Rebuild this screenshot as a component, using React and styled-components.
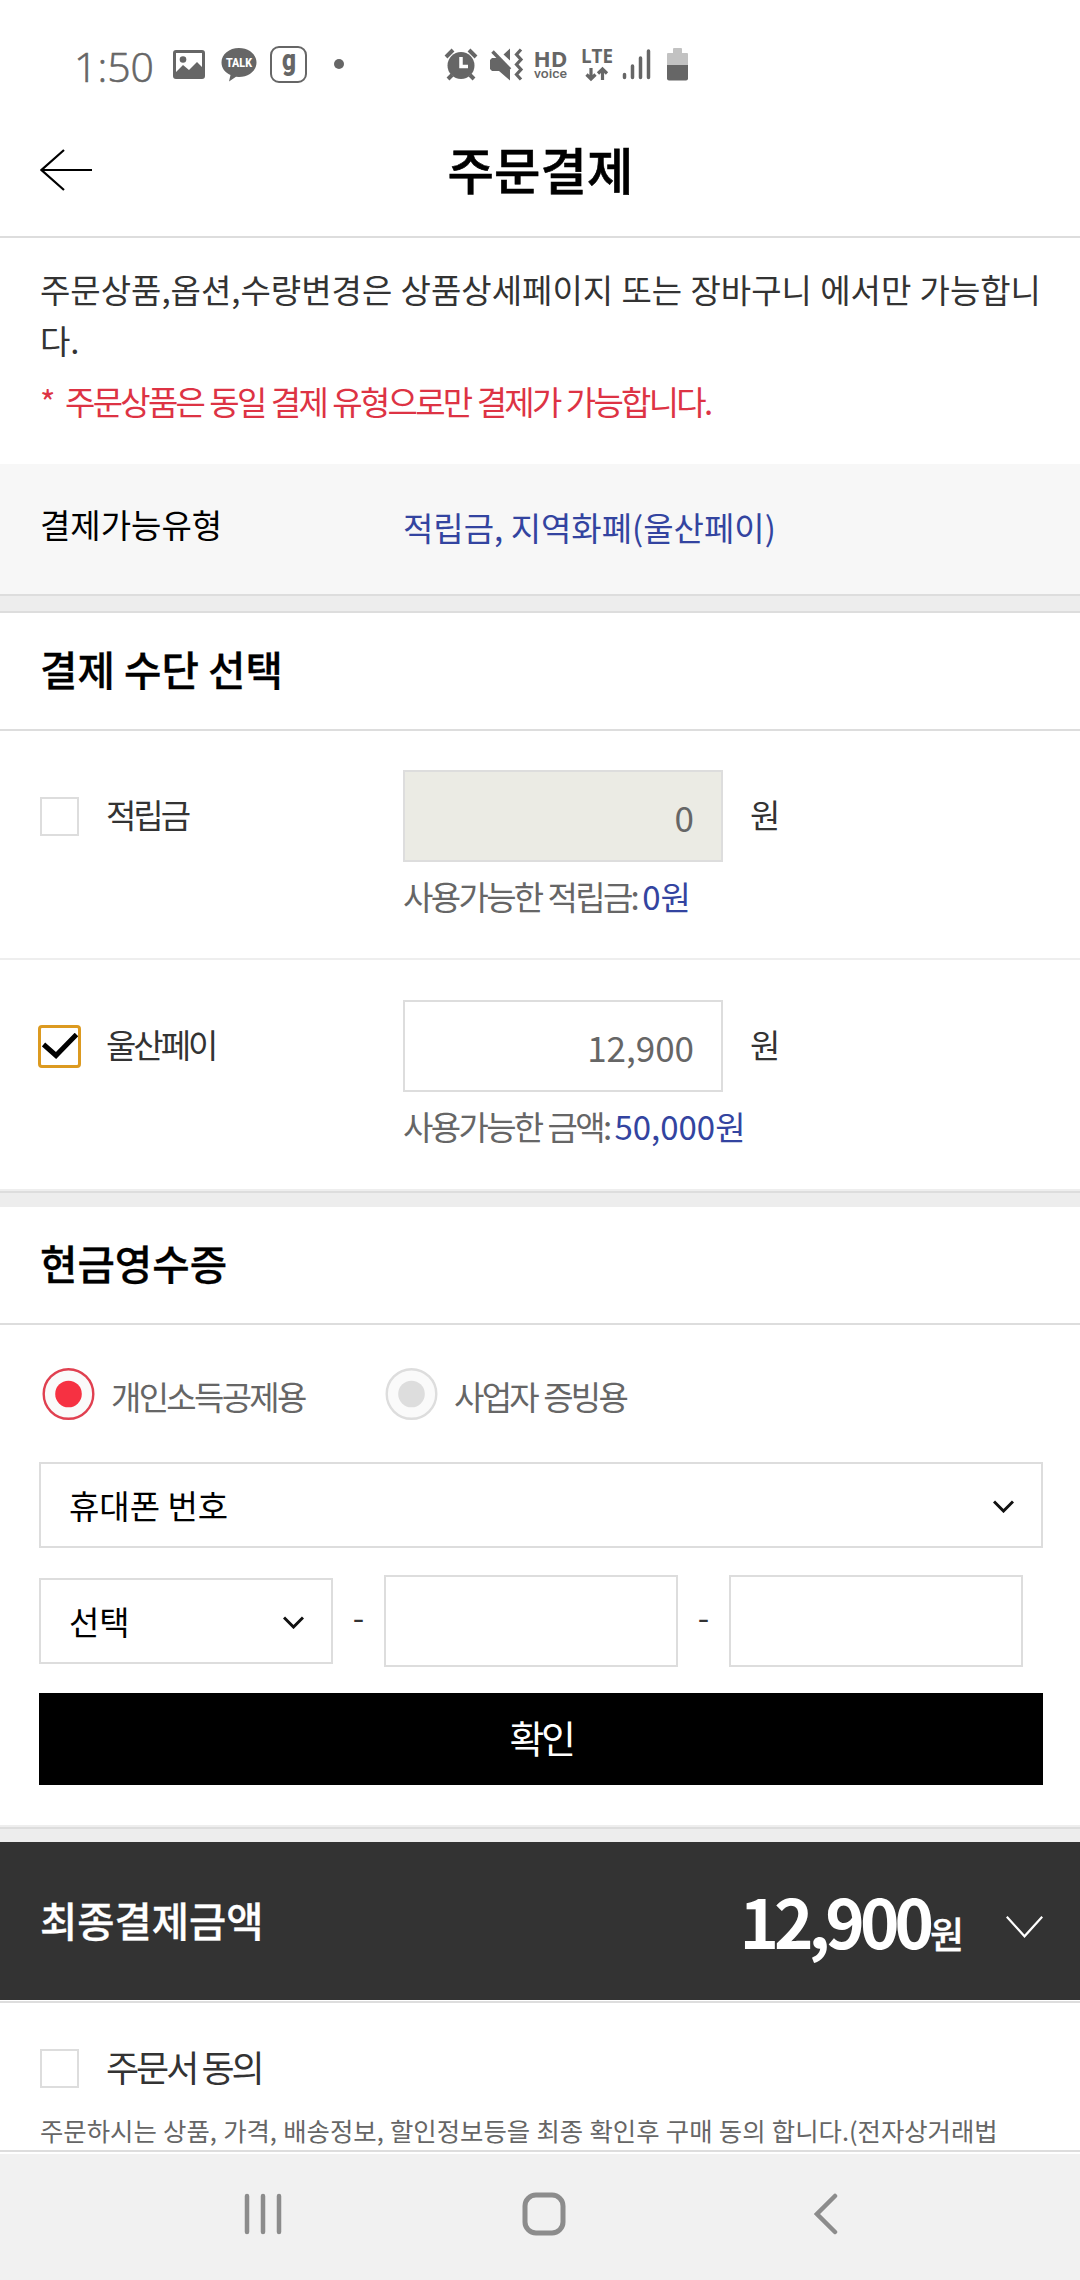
import React from 'react';
import styled, { createGlobalStyle } from 'styled-components';

const GlobalStyle = createGlobalStyle`
    * {
        box-sizing: border-box;
    }

    body {
        margin: 0;
        background-color: #fff;
        color: #333;
        font-family: "Noto Sans CJK KR", "Noto Sans", sans-serif;
        font-size: 33px;
        line-height: 50px;
    }

    h1, h2, p {
        margin: 0;
        font-weight: 500;
    }

    svg {
        display: block;
        flex: none;
    }
`

const Screen = styled.div`
    display: flex;
    flex-direction: column;
    width: 1080px;
    height: 2280px;
    overflow: hidden;
`

// status bar
const StatusBar = styled.div`
    display: flex;
    align-items: center;
    height: 104px;
    padding: 25px 0 0 73px;
    color: #666;
`

const Clock = styled.span`
    width: 100px;
    font-family: "Open Sans", "Noto Sans", sans-serif;
    font-size: 41px;
    font-weight: 300;
    padding: 2px 0 0 1px;
    -webkit-text-stroke: 0.6px #666;
`

// header
const Header = styled.header`
    display: grid;
    grid-template-columns: 52px 1fr 52px;
    align-items: center;
    height: 134px;
    padding: 0 40px;
    border-bottom: 2px solid #ddd;
`

const Title = styled.h1`
    color: #000;
    font-size: 50.5px;
    line-height: 72px;
    text-align: center;
    padding: 0 0 4px 1px;
    -webkit-text-stroke: 0.6px #000;
`

// notice
const Notice = styled.section`
    height: 226px;
    padding: 26px 30px 0 40px;
`

const NoticeText = styled.p`
    font-weight: 400;
    line-height: 51px;
    word-break: break-all;
    word-spacing: 0.9px;
`

const NoticeWarning = styled.div`
    display: flex;
    margin-top: 10px;
    color: #dd3344;
    letter-spacing: -2.72px;
    word-spacing: 1.5px;
    line-height: 51px;
`

const Star = styled.span`
    width: 25px;
`

const TypeRow = styled.section`
    display: grid;
    grid-template-columns: 363px 1fr;
    height: 130px;
    padding: 35px 39px 0 40px;
    background-color: #f7f7f7;
    color: #000;
`

const TypeValue = styled.span`
    color: #3344a0;
    padding-top: 3px;
`

const Divider = styled.div`
    height: ${({ $height }) => $height}px;
    border-top: ${({ $inner }) => ($inner ? '2px solid #eee' : '0')};
    border-bottom: ${({ $closed }) => ($closed ? '2px solid #ddd' : '0')};
    background: linear-gradient(#ddd 2px, #ededed 2px);
    background-origin: padding-box;
`

const SectionTitle = styled.h2`
    height: 118px;
    padding: 31px 40px 0;
    border-bottom: 2px solid #ddd;
    color: #000;
    font-size: 40.7px;
    -webkit-text-stroke: 0.3px #000;
`

// payment rows
const PayRow = styled.div`
    display: grid;
    grid-template-columns: 363px 1fr;
    height: 229px;
    padding: ${({ $line }) => ($line ? 39 : 40)}px 39px 0 40px;
    border-bottom: ${({ $line }) => ($line ? '2px solid #eee' : '0')};
`

const CheckLabel = styled.label`
    display: flex;
    align-items: center;
    height: 92px;
    letter-spacing: -3px;
`

const CheckText = styled.span`
    font-size: ${({ $size }) => $size || 33}px;
    padding-bottom: 4px;
    margin-left: 27px;
`

const Box = styled.span`
    display: flex;
    align-items: center;
    justify-content: center;
    width: ${({ $checked }) => ($checked ? 43 : 39)}px;
    height: ${({ $checked }) => ($checked ? 43 : 39)}px;
    margin: ${({ $checked }) => ($checked ? '0 -2px' : '0')};
    border: ${({ $checked }) => ($checked ? '3px solid #dc9a20' : '2px solid #ddd')};
    border-radius: ${({ $checked }) => ($checked ? '4px' : '0')};
`

const AmountLine = styled.div`
    display: flex;
    align-items: center;
`

const AmountField = styled.div`
    width: 320px;
    height: 92px;
    margin-right: 27px;
    padding: 1px 27px 0 0;
    border: 2px solid #ddd;
    background-color: ${({ $disabled }) => ($disabled ? '#ebebe4' : '#fff')};
    color: #666;
    font-size: 35px;
    line-height: 88px;
    text-align: right;
`

const Unit = styled.span`
    padding-bottom: 4px;
`

const Hint = styled.p`
    margin-top: 9px;
    color: #666;
    font-weight: 400;
    letter-spacing: -2.65px;
    word-spacing: 1.2px;

    em {
        color: #3344a0;
        font-style: normal;
        letter-spacing: 0;
        margin-left: 5px;
    }
`

// cash receipt
const Receipt = styled.div`
    display: flex;
    flex-direction: column;
    height: 500px;
    padding: 43px 37px 0 39px;
`

const RadioGroup = styled.div`
    display: flex;
    height: 52px;
    margin-bottom: 42px;
    padding-left: 3px;
`

const RadioLabel = styled.label`
    display: flex;
    align-items: center;
    gap: 16px;
    width: 343px;
    color: #666;
    letter-spacing: -2.7px;
    word-spacing: 1.5px;

    span {
        padding-top: 4px;
    }
`

const Select = styled.div`
    display: flex;
    align-items: center;
    justify-content: space-between;
    width: ${({ $width }) => $width || '100%'};
    height: 86px;
    padding: 0 27px 0 28px;
    border: 2px solid #ddd;
    color: #000;

    svg {
        margin-top: 2px;
    }
`

const PhoneRow = styled.div`
    display: flex;
    align-items: center;
    margin: 27px 0 26px;
`

const PhoneField = styled.div`
    width: 294px;
    height: 92px;
    border: 2px solid #ddd;
`

const Dash = styled.span`
    width: 51px;
    text-align: center;
    padding-bottom: 10px;
`

const ConfirmButton = styled.button`
    height: 92px;
    padding: 0 0 4px;
    border: 0;
    background-color: #000;
    color: #fff;
    font: 400 38px/50px "Noto Sans CJK KR", sans-serif;
    letter-spacing: -3.5px;
`

// total
const Total = styled.section`
    display: flex;
    align-items: center;
    height: 158px;
    padding: 0 37px 0 40px;
    background-color: #333;
    color: #fff;
    font-weight: 500;

    svg {
        margin-top: 11px;
    }
`

const TotalLabel = styled.span`
    flex: 1;
    font-size: 40.5px;
    padding-bottom: 3px;
    -webkit-text-stroke: 0.3px #fff;
`

const TotalPrice = styled.span`
    margin-right: 45px;
    padding-top: 11px;
    font-size: 67px;
    font-weight: 700;
    letter-spacing: -5px;
    line-height: 98px;

    small {
        font-size: 37px;
        font-weight: 500;
        margin-left: 1px;
        letter-spacing: -3px;
        -webkit-text-stroke: 0.3px #fff;
    }
`

const Agreement = styled.section`
    flex: 1;
    margin-top: 1px;
    padding: 19px 0 0 40px;
    border-top: 2px solid #ddd;
    border-bottom: 2px solid #ddd;
`

const AgreementText = styled.p`
    margin-top: -4px;
    color: #666;
    font-size: 25.4px;
    font-weight: 400;
    line-height: 40px;
    white-space: nowrap;
    word-spacing: 0.6px;
`

const NavBar = styled.nav`
    display: grid;
    grid-template-columns: 279px 292px 1fr;
    height: 126px;
    margin-top: 2px;
    padding: 38px 0 0 243px;
    background-color: #f1f1f1;
`

const StatusIcons = () => (
    <svg width="620" height="50" viewBox="173 40 620 50" fill="#666">
        {/* gallery */}
        <path fillRule="evenodd" d="M176 50h26a3 3 0 0 1 3 3v23a3 3 0 0 1-3 3h-26a3 3 0 0 1-3-3V53a3 3 0 0 1 3-3zM176 53v19l7-7 6 5 8-8 5 5V53z" />
        <circle cx="183" cy="59.500" r="3.300" />
        {/* talk */}
        <path d="M239 48c9.800 0 17.500 6.300 17.500 14.500S248.800 77 239 77l-3-.2-7 4.700 1.500-6.500c-5.500-2.500-9-7-9-12.500C221.500 54.300 229.200 48 239 48z" />
        <text x="239" y="67" fill="#fff" fontFamily="Roboto" fontWeight="800" fontSize="12.500" textAnchor="middle" textLength="26" lengthAdjust="spacingAndGlyphs">TALK</text>
        {/* g */}
        <rect x="271" y="47" width="35" height="35" rx="8" fill="none" stroke="#666" strokeWidth="2" />
        <text x="289" y="69.500" fontFamily="Roboto" fontWeight="900" fontSize="30" textAnchor="middle" textLength="14" lengthAdjust="spacingAndGlyphs">g</text>
        <circle cx="339" cy="64" r="5" />
        {/* alarm */}
        <circle cx="461" cy="65.500" r="13.500" />
        <path d="M446 57l7-7M476 57l-7-7M452 75l-4 4M470 75l4 4" stroke="#666" strokeWidth="4" />
        <path d="M461 57v9.500h7" fill="none" stroke="#fff" strokeWidth="3.500" />
        {/* muted, vibrate */}
        <path d="M490 60l2-2h6l12 12v10.500l-11-9.500h-7l-2-2zM503.500 54.500l6.500-6v12z" />
        <path d="M492.500 51.500l17.500 18" stroke="#666" strokeWidth="3.500" />
        <path d="M521 49.500l-4.500 5 4.500 5-4.500 5 4.500 5-4.500 5 4.500 5" fill="none" stroke="#666" strokeWidth="3.200" />
        {/* HD voice */}
        <text fontWeight="700">
            <tspan x="533.500" y="66.500" fontFamily="Open Sans" fontSize="21" textLength="34" lengthAdjust="spacingAndGlyphs">HD</tspan>
            <tspan x="534" y="78" fontFamily="Roboto" fontWeight="500" fontSize="13.500" textLength="33" lengthAdjust="spacingAndGlyphs">voice</tspan>
        </text>
        {/* LTE */}
        <text x="581" y="62.500" fontFamily="Open Sans" fontWeight="700" fontSize="19.500" textLength="32" lengthAdjust="spacingAndGlyphs">LTE</text>
        <path d="M591 68v11M586.500 74.500l4.500 4.500 4.500-4.500M602.500 80V69M598 73.500l4.500-4.500 4.500 4.500" fill="none" stroke="#666" strokeWidth="3.200" />
        {/* signal */}
        <path d="M624.500 74.500v3M632.500 66v11.500M640.500 58v19.500M648.500 51v26.500" stroke="#666" strokeWidth="3.500" strokeLinecap="round" />
        {/* battery */}
        <path d="M667 66V54a1 1 0 0 1 1-1h5v-4a1 1 0 0 1 1-1h7a1 1 0 0 1 1 1v4h5a1 1 0 0 1 1 1v12z" fill="#c2c2c2" />
        <path d="M667 65h21v13.500a2 2 0 0 1-2 2h-17a2 2 0 0 1-2-2z" />
    </svg>
)

const BackArrow = () => (
    <svg width="52" height="42" viewBox="0 0 52 42" fill="none" stroke="#000" strokeWidth="2.200">
        <path d="M24 1L1.500 21 24 41M1.500 21H52" />
    </svg>
)

const CheckMark = () => (
    <svg width="36" height="26" viewBox="0 0 36 26" fill="none" stroke="#000" strokeWidth="5">
        <path d="M1.500 11.500L14 22.500 34.500 1.500" />
    </svg>
)

const Chevron = () => (
    <svg width="21" height="13" viewBox="0 0 21 13" fill="none" stroke="#111" strokeWidth="3">
        <path d="M1 1.500l9.500 9.500L20 1.500" />
    </svg>
)

const ThinChevron = () => (
    <svg width="37" height="22" viewBox="0 0 37 22" fill="none" stroke="#fff" strokeWidth="2.200">
        <path d="M.8.800l17.700 19.500L36.200.800" />
    </svg>
)

const RadioIcon = ({ checked }) => (
    <svg width="53" height="52" viewBox="0 0 53 52">
        <circle cx="26.500" cy="26" r="24.800" fill="#fafafa" stroke={checked ? '#e04050' : '#ddd'} strokeWidth="2.400" />
        <circle cx="26.500" cy="26" r="13.300" fill={checked ? '#f63142' : '#ddd'} />
    </svg>
)

const PayMethod = ({ name, value, hint, available, checked, line }) => (
    <PayRow $line={line}>
        <CheckLabel>
            <Box $checked={checked}>{checked && <CheckMark />}</Box>
            <CheckText>{name}</CheckText>
        </CheckLabel>
        <div>
            <AmountLine>
                <AmountField $disabled={!checked}>{value}</AmountField>
                <Unit>원</Unit>
            </AmountLine>
            <Hint>{hint}<em>{available}</em></Hint>
        </div>
    </PayRow>
)

const App = () => {
    return (
        <Screen>
            <GlobalStyle />
            <StatusBar>
                <Clock>1:50</Clock>
                <StatusIcons />
            </StatusBar>
            <Header>
                <BackArrow />
                <Title>주문결제</Title>
            </Header>
            <Notice>
                <NoticeText>주문상품,옵션,수량변경은 상품상세페이지 또는 장바구니 에서만 가능합니다.</NoticeText>
                <NoticeWarning>
                    <Star>*</Star>
                    <span>주문상품은 동일 결제 유형으로만 결제가 가능합니다.</span>
                </NoticeWarning>
            </Notice>
            <TypeRow>
                <span>결제가능유형</span>
                <TypeValue>적립금, 지역화폐(울산페이)</TypeValue>
            </TypeRow>
            <Divider $height={19} $closed />

            <SectionTitle>결제 수단 선택</SectionTitle>
            <PayMethod name="적립금" value="0" hint="사용가능한 적립금:" available="0원" line />
            <PayMethod name="울산페이" value="12,900" hint="사용가능한 금액:" available="50,000원" checked />
            <Divider $height={18} $inner />

            <SectionTitle>현금영수증</SectionTitle>
            <Receipt>
                <RadioGroup>
                    <RadioLabel>
                        <RadioIcon checked />
                        <span>개인소득공제용</span>
                    </RadioLabel>
                    <RadioLabel>
                        <RadioIcon />
                        <span>사업자 증빙용</span>
                    </RadioLabel>
                </RadioGroup>
                <Select>
                    <span>휴대폰 번호</span>
                    <Chevron />
                </Select>
                <PhoneRow>
                    <Select $width="294px">
                        <span>선택</span>
                        <Chevron />
                    </Select>
                    <Dash>-</Dash>
                    <PhoneField />
                    <Dash>-</Dash>
                    <PhoneField />
                </PhoneRow>
                <ConfirmButton>확인</ConfirmButton>
            </Receipt>
            <Divider $height={17} $inner />

            <Total>
                <TotalLabel>최종결제금액</TotalLabel>
                <TotalPrice>12,900<small>원</small></TotalPrice>
                <ThinChevron />
            </Total>
            <Agreement>
                <CheckLabel>
                    <Box />
                    <CheckText $size={36}>주문서 동의</CheckText>
                </CheckLabel>
                <AgreementText>주문하시는 상품, 가격, 배송정보, 할인정보등을 최종 확인후 구매 동의 합니다.(전자상거래법</AgreementText>
            </Agreement>
            <NavBar>
                <svg width="40" height="44" viewBox="0 0 40 44" stroke="#8c8c8c" strokeWidth="4.500" strokeLinecap="round">
                    <path d="M4 4v36M20 4v36M36 4v36" />
                </svg>
                <svg width="44" height="44" viewBox="0 0 44 44" fill="none" stroke="#8c8c8c" strokeWidth="5">
                    <rect x="3" y="3" width="38" height="38" rx="11" />
                </svg>
                <svg width="26" height="44" viewBox="0 0 26 44" fill="none" stroke="#8c8c8c" strokeWidth="4.500" strokeLinecap="round">
                    <path d="M21 4L3 22l18 18" />
                </svg>
            </NavBar>
        </Screen>
    );
};

export default App;
